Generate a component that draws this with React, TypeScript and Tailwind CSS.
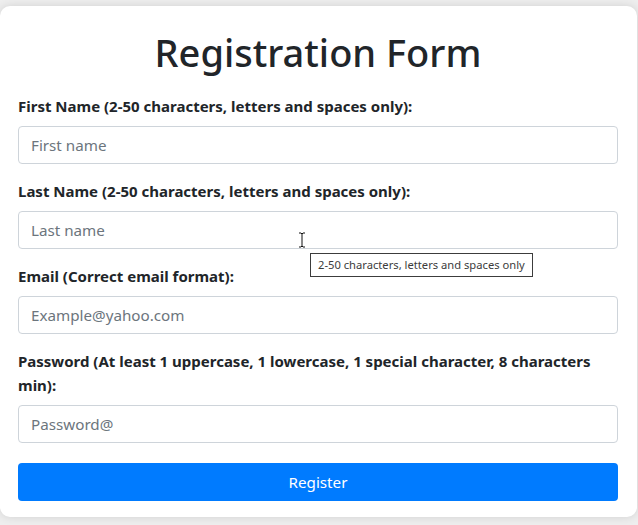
import React from "react";

const fields = [
  { label: "First Name (2-50 characters, letters and spaces only):", placeholder: "First name", type: "text" },
  { label: "Last Name (2-50 characters, letters and spaces only):", placeholder: "Last name", type: "text" },
  { label: "Email (Correct email format):", placeholder: "Example@yahoo.com", type: "email" },
  {
    label: "Password (At least 1 uppercase, 1 lowercase, 1 special character, 8 characters min):",
    placeholder: "Password@",
    type: "password",
  },
];

export default function App() {
  return (
    <div className="min-h-screen bg-[#eeeeee] pt-[6px] font-['Noto_Sans',sans-serif] text-[#212529]">
      <div className="relative w-[637px] rounded-[10px] bg-white pl-[18px] pr-[19px] pt-[22px] pb-[16px] shadow-[0_0_10px_rgba(0,0,0,0.12)]">
        <h1 className="mb-[18px] text-center text-[38px] font-medium leading-[48px]">Registration Form</h1>

        <form className="flex flex-col" onSubmit={(e) => e.preventDefault()}>
          {fields.map((f) => (
            <div key={f.placeholder} className="mb-[15px]">
              <label className="mb-[8px] block text-[15px] font-bold leading-[24px]">{f.label}</label>
              <input
                type={f.type === "password" ? "text" : f.type}
                placeholder={f.placeholder}
                className="block h-[38px] w-full rounded-[4px] border border-[#ced4da] bg-white px-[12px] text-[15.2px] placeholder:text-[#6c757d] focus:outline-none"
              />
            </div>
          ))}
          <button
            type="submit"
            className="mt-[5px] h-[38px] w-full rounded-[4px] bg-[#007bff] text-[15.2px] text-white"
          >
            Register
          </button>
        </form>

        {/* hover tooltip + text cursor over the last-name field */}
        <div className="pointer-events-none absolute left-[310px] top-[247px] border border-[#3c3c3c] bg-white px-[7px] py-[3px] text-[11.2px] leading-[16px] text-[#3c3c3c]">
          2-50 characters, letters and spaces only
        </div>
        <svg className="pointer-events-none absolute left-[297px] top-[226px]" width="10" height="16" viewBox="0 0 10 16">
          <path d="M2 1h2l1 1 1-1h2M5 2v12M2 15h2l1-1 1 1h2" fill="none" stroke="#111" strokeWidth="1" />
        </svg>
      </div>
    </div>
  );
}
